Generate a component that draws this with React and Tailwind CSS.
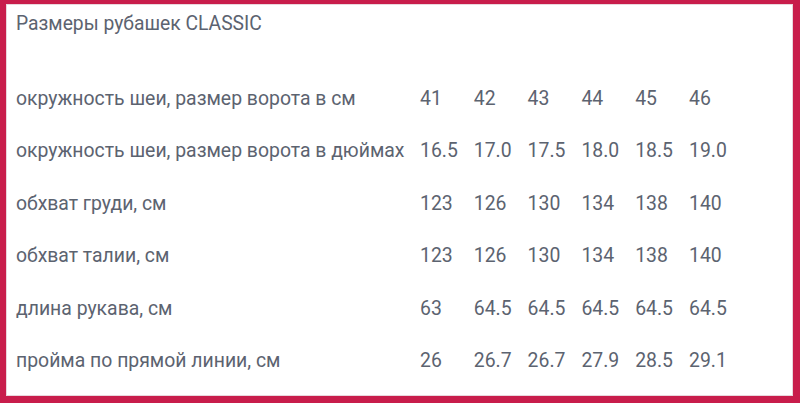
import React from 'react';

const COLS = ['41', '42', '43', '44', '45', '46'];

const rows = [
  { label: 'окружность шеи, размер ворота в см', values: COLS },
  { label: 'окружность шеи, размер ворота в дюймах', values: ['16.5', '17.0', '17.5', '18.0', '18.5', '19.0'] },
  { label: 'обхват груди, см', values: ['123', '126', '130', '134', '138', '140'] },
  { label: 'обхват талии, см', values: ['123', '126', '130', '134', '138', '140'] },
  { label: 'длина рукава, см', values: ['63', '64.5', '64.5', '64.5', '64.5', '64.5'] },
  { label: 'пройма по прямой линии, см', values: ['26', '26.7', '26.7', '27.9', '28.5', '29.1'] },
];

export default function App() {
  return (
    <div className="w-[800px] h-[403px] bg-[#c81d4b] pl-[6px] pt-[4px] pr-[7px] pb-[7px]">
      <div className="h-full bg-white border border-[#e9d6dc] pl-[9px] pt-[7px] text-[#5c6370] font-['Roboto',sans-serif]">
        <h2 className="text-[19.3px] leading-6">Размеры рубашек CLASSIC</h2>

        {/* Table */}
        <div className="mt-[51px] flex flex-col gap-[28.4px]">
          {rows.map((row) => (
            <div key={row.label} className="grid grid-cols-[404px_repeat(6,53.8px)] text-[19.4px] leading-6">
              <span className="whitespace-nowrap">{row.label}</span>
              {row.values.map((v, i) => (
                <span key={i}>{v}</span>
              ))}
            </div>
          ))}
        </div>
      </div>
    </div>
  );
}
